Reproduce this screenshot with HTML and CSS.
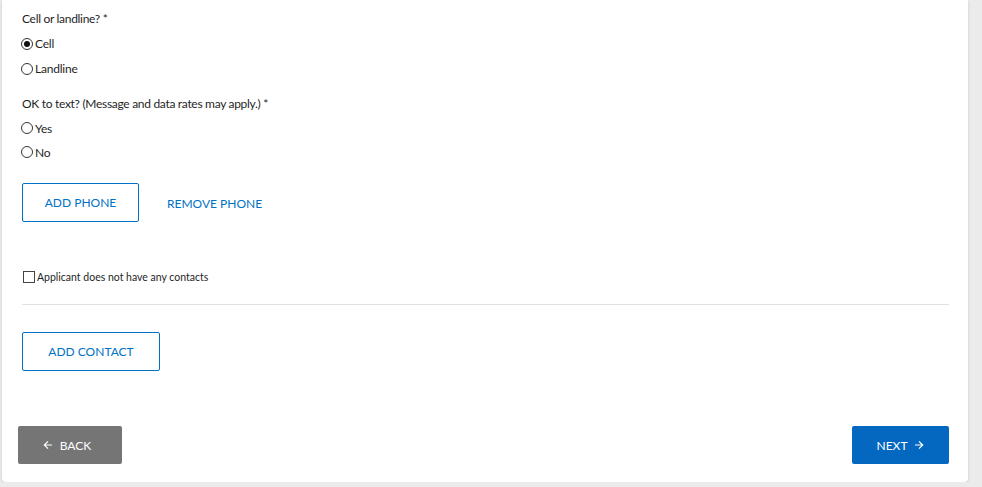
FILE: index.html
```html
<!DOCTYPE html>
<html>
<head>
<meta charset="utf-8">
<link rel="stylesheet" href="styles.css">
</head>
<body>
<div class="card">
  <div class="content">
    <fieldset class="group">
      <div class="q-label">Cell or landline? *</div>
      <label class="radio-row"><span class="radio checked"></span>Cell</label>
      <label class="radio-row"><span class="radio"></span>Landline</label>
    </fieldset>
    <fieldset class="group group2">
      <div class="q-label">OK to text? (Message and data rates may apply.) *</div>
      <label class="radio-row"><span class="radio"></span>Yes</label>
      <label class="radio-row"><span class="radio"></span>No</label>
    </fieldset>
    <div class="phone-actions">
      <button class="btn-outline btn-phone">ADD PHONE</button>
      <button class="btn-link">REMOVE PHONE</button>
    </div>
    <label class="check-row"><span class="checkbox"></span>Applicant does not have any contacts</label>
    <hr class="divider">
    <button class="btn-outline btn-contact">ADD CONTACT</button>
  </div>
  <div class="footer">
    <button class="btn-back"><svg width="10" height="10" viewBox="0 0 10 10"><path d="M9 5H1.5M5 1.3L1.3 5L5 8.7" fill="none" stroke="#fff" stroke-width="1.2"/></svg>BACK</button>
    <button class="btn-next">NEXT<svg width="10" height="10" viewBox="0 0 10 10"><path d="M1 5h7.5M5 1.3L8.7 5L5 8.7" fill="none" stroke="#fff" stroke-width="1.2"/></svg></button>
  </div>
</div>
</body>
</html>
```

FILE: styles.css
```css
html, body {
  margin: 0;
  padding: 0;
  background: #ebebeb;
  font-family: Lato, "Open Sans", sans-serif;
  color: #1f1f1f;
}
.card {
  margin-left: 2px;
  width: 966px;
  height: 482px;
  box-sizing: border-box;
  background: #fff;
  border-radius: 0 0 4px 4px;
  box-shadow: 0 1px 3px rgba(0,0,0,0.15);
  padding-top: 7px;
  display: flex;
  flex-direction: column;
}
.content {
  padding: 0 19px 0 19px;
}
.group {
  border: 0;
  margin: 0;
  padding: 0;
}
.group2 {
  margin-top: 11px;
}
.q-label {
  height: 24px;
  line-height: 24px;
  font-size: 12px;
  letter-spacing: -0.3px;
  padding-left: 1px;
}
.radio-row {
  display: flex;
  align-items: center;
  height: 25px;
  font-size: 12px;
  letter-spacing: -0.2px;
}
.group2 .radio-row {
  height: 24px;
}
.radio {
  width: 10px;
  height: 10px;
  border: 1px solid #333;
  border-radius: 50%;
  margin-left: 0;
  margin-right: 2px;
  position: relative;
  flex: none;
}
.radio.checked::after {
  content: "";
  position: absolute;
  left: 2px;
  top: 2px;
  width: 6px;
  height: 6px;
  border-radius: 50%;
  background: #111;
}
.phone-actions {
  display: flex;
  align-items: center;
  margin-top: 19px;
  margin-left: 1px;
  gap: 28px;
}
button {
  font-family: inherit;
  cursor: pointer;
}
.btn-outline {
  height: 39px;
  background: #fff;
  border: 1px solid #0072c6;
  border-radius: 2px;
  color: #0072c6;
  font-size: 12px;
  padding: 0;
  margin: 0;
}
.btn-phone {
  width: 117px;
}
.btn-link {
  background: none;
  border: 0;
  padding: 0;
  color: #0072c6;
  font-size: 12px;
  margin-top: 2px;
}
.check-row {
  display: flex;
  align-items: center;
  height: 20px;
  margin-top: 45px;
  margin-left: 2px;
  font-size: 10.5px;
}
.checkbox {
  width: 10px;
  height: 10px;
  border: 1px solid #444;
  margin-right: 2px;
  flex: none;
}
.divider {
  border: 0;
  border-top: 1px solid #e0e0e0;
  margin: 17px 0 0 1px;
  height: 0;
}
.btn-contact {
  margin-top: 27px;
  margin-left: 1px;
  width: 138px;
}
.footer {
  margin-top: auto;
  display: flex;
  justify-content: space-between;
  padding: 0 19px 18px 16px;
}
.btn-back, .btn-next {
  height: 38px;
  border: 0;
  border-radius: 2px;
  color: #fff;
  font-size: 12px;
  display: flex;
  align-items: center;
  justify-content: center;
  gap: 7px;
  padding: 0;
}
.btn-back {
  width: 104px;
  background: #757575;
  padding-right: 6px;
  box-sizing: border-box;
}
.btn-next {
  width: 97px;
  background: #0568c0;
}
```
